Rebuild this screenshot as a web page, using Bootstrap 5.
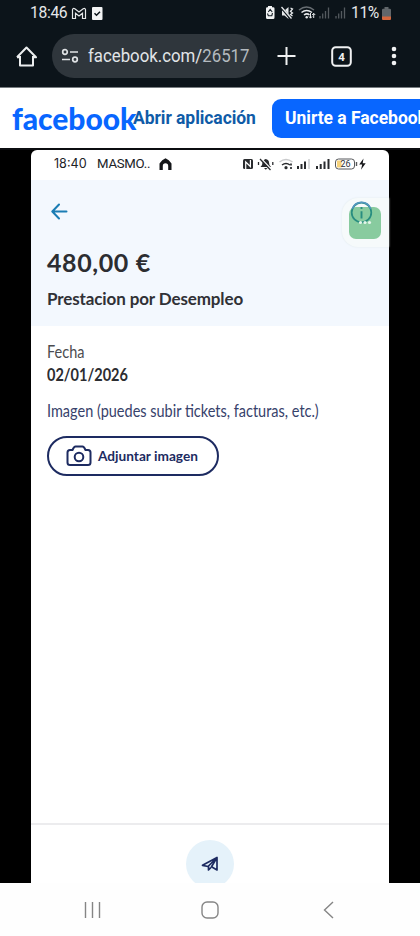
<!DOCTYPE html>
<html lang="es">
<head>
<meta charset="utf-8">
<meta name="viewport" content="width=device-width, initial-scale=1">
<title>Facebook</title>
<link href="https://cdn.jsdelivr.net/npm/bootstrap@5.3.0/dist/css/bootstrap.min.css" rel="stylesheet">
<style>
body{font-family:Roboto,"Liberation Sans",sans-serif;width:420px;height:936px;overflow:hidden;background:#fefefe}
svg{display:block;flex:none}
span,h1,h2,p,a,button{white-space:nowrap}
.chrome{background:#0c141a;height:87px;color:#e6e8ea}
.sysbar{height:26px;padding:0 29px 0 30px;font-size:15.7px;line-height:26px;letter-spacing:-.35px}
.toolbar{height:60px;padding:0 16px}
.omnibox{width:206px;height:44px;background:#2f363c;margin-left:15px;padding-left:9px;border-radius:22px}
.url{font-size:18.5px;line-height:22px;margin-left:9px;color:#e2e5e8;transform:scaleX(.908);transform-origin:0 50%}
.url i{font-style:normal;color:#b4babf}
.plus{margin-left:19px}
.tabs{margin-left:35px}
.dots{margin-left:39px}
.fbhead{height:63px;background:#fff;border-top:1px solid #777c80;border-bottom:2px solid #0b0d10;padding-left:12px}
.wordmark{font:900 30px/34px Lato,sans-serif;color:#0866ff;width:121px;letter-spacing:-.05px}
.openapp{color:#0f5ba7;font-weight:700;font-size:17.5px;width:139px;letter-spacing:-.06px}
.join{background:#0866ff;border-radius:9px;height:39px;font-weight:700;font-size:17.5px;padding:0 13px;line-height:39px;color:#fff;letter-spacing:-.03px}
.stage{height:733px;background:#000;padding:0 31px;overflow:hidden}
.shot{width:358px;height:733px;background:#fff;border-radius:6px 6px 0 0;font-family:Lato,sans-serif}
.innerbar{height:30px;padding:0 23px 0 23px;color:#202226;font:13.2px/28px Roboto,sans-serif;padding-bottom:2px}
.t1{font:12.6px/28px Inter,sans-serif;width:34px}
.t2{margin-left:9px;letter-spacing:-.25px;width:52px}
.house{margin-left:10px}
.summary{height:146px;background:#f3f8fe;padding:20px 16px 0}
.amount{font-size:25px;font-weight:700;line-height:30px;color:#2c2d31;margin:27px 0 0;letter-spacing:.6px}
.concept{font-size:17px;font-weight:700;line-height:22px;color:#303136;margin:11px 0 0;letter-spacing:-.12px}
.details{height:497px;padding:15px 16px 0;font-size:16.5px;line-height:22px}
.details p span,.attach span{display:inline-block;transform-origin:0 50%}
.lbl{color:#4b4c50}
.lbl span{transform:scaleX(.88)}
.datum{font-weight:700;color:#2c2d31;margin-top:1px}
.datum span{transform:scaleX(.88)}
.hint{color:#37426b;margin-top:14px}
.hint span{transform:scaleX(.878)}
.attach{width:172px;height:40px;border:2px solid #1d2b61;border-radius:20px;color:#1d2b61;font:700 14px/20px Lato,sans-serif;background:#fff;margin-top:14px;padding:0 0 0 17px}
.attach span{margin-left:6px;transform:scaleX(.975)}
.sendbar{height:60px;border-top:2px solid #ececee;padding-top:15px}
.send{width:48px;height:48px;background:#e5f2fa}
.floater{right:0;top:48px;width:47px;height:49px;border-radius:16px 0 0 16px;background:#f6fafb;box-shadow:0 0 2px #dfe8ea}
.green{left:7px;top:9px;width:32px;height:32px;border-radius:7px;background:#88cb9f}
.info{left:8px;top:3px}
.ellipsis{left:16px;top:22px}
.navkeys{height:53px;background:#fefefe;padding:0 86px 0 84px}
.homekey{margin-left:-4px}
</style>
<script src="https://cdn.jsdelivr.net/npm/bootstrap@5.3.0/dist/js/bootstrap.bundle.min.js"></script>
</head>
<body>
<header class="chrome">
  <div class="sysbar d-flex align-items-center">
    <span>18:46</span>
    <svg class="ms-1" width="16" height="13" viewBox="0 0 16 13" fill="none" stroke="#e6e8ea" stroke-width="1.2"><path d="M1.500 11.500V2.600Q2 .7 3.800 1.800L8 5l4.200-3.200Q14 .7 14.500 2.600v8.900h-3V6.200L8 9 4.500 6.200v5.300z"/></svg>
    <svg class="ms-1" width="12" height="13" viewBox="0 0 12 13"><rect x="1" width="10.500" height="13" rx="1" fill="#f2f3f4"/><path d="M3.500 6.300l2 2L9 4.800" fill="none" stroke="#0c141a" stroke-width="1.500"/></svg>
    <svg class="ms-auto" width="82" height="16" viewBox="265 5 82 16"><path d="M266 8.500q0-1.200 1.200-1.200h.8V6h4v1.300h1.200q1.300 0 1.300 1.200v9q0 1.500-1.300 1.500h-5.900q-1.300 0-1.300-1.500z" fill="#f2f3f4"/><path d="M268.300 12l1.900-2.500 2 2.500M272.500 13l-.7 2.700h-3.500l-.8-2.200" fill="none" stroke="#172027" stroke-width="1.100"/><path d="M282 10.500h2.500l4-3.500v12l-4-3.500H282z" fill="#e6e8ea"/><path d="M281 7l9 11" stroke="#0c141a" stroke-width="2.400"/><path d="M281.500 7l10 11.500M290.500 8l2 1-2 2.500 2 1.500-2 1.500 2 1.500" fill="none" stroke="#e6e8ea" stroke-width="1.300"/><g fill="none" stroke-width="1.500"><path d="M299 10q7.500-6 15 0" stroke="#686e73"/><path d="M301.500 12.500q5-4 10.500 0M304 15q3-2.300 5.500 0" stroke="#e6e8ea"/><path d="M310.500 13v5m-1.600-1.600l1.600 1.800 1.600-1.800M313.700 18v-4.500m-1.500 1.500l1.500-1.700 1.500 1.700" stroke="#e6e8ea" stroke-width="1"/></g><circle cx="306.700" cy="17.300" r="1.200" fill="#e6e8ea"/><g stroke="#545a5f" stroke-width="1.300"><path d="M320 16v2.500M322.700 13.500v5M325.500 11v7.500M328.500 7.500v11M336 16v2.500M338.700 13.500v5M341.500 11v7.500M344.500 7.500v11"/></g></svg>
    <span class="ms-1">11%</span>
    <svg style="margin-left:3px" width="9" height="13" viewBox="0 0 9 13"><path d="M0 3q0-1.200 1.200-1.200H2.500V0h4v1.800h1.300Q9 1.800 9 3v7H0z" fill="#61666a"/><path d="M0 9.500h9V12q0 1-1 1H1q-1 0-1-1z" fill="#d4673d"/></svg>
  </div>
  <div class="toolbar d-flex align-items-center">
    <svg width="21" height="21" viewBox="0 0 21 21" fill="none" stroke="#eceeef" stroke-width="2" stroke-linejoin="round"><path d="M4 10v9.500h13V10M1 11.300L10.500 1.500 20 11.300h-3M1 11.300h3"/></svg>
    <div class="omnibox d-flex align-items-center">
      <svg width="18" height="16" viewBox="0 0 18 16" fill="none" stroke="#dfe2e4" stroke-width="1.700"><circle cx="4" cy="4" r="2.300"/><path d="M9 4h8M1 11.500h8"/><circle cx="14" cy="11.500" r="2.300"/></svg>
      <span class="url">facebook.com/<i>26517</i></span>
    </div>
    <svg class="plus" width="19" height="20" viewBox="0 0 19 20" stroke="#f0f1f2" stroke-width="2"><path d="M9.500 1v18M.5 10h18"/></svg>
    <svg class="tabs" width="21" height="21" viewBox="0 0 21 21"><rect x="1.200" y="1.200" width="18.600" height="18.600" rx="3.500" fill="none" stroke="#f0f1f2" stroke-width="2"/><text x="10.500" y="14.500" text-anchor="middle" font-size="11.500" font-weight="700" fill="#f0f1f2">4</text></svg>
    <svg class="dots" width="6" height="20" viewBox="0 0 6 20" fill="#f0f1f2"><circle cx="3" cy="3" r="2.300"/><circle cx="3" cy="10" r="2.300"/><circle cx="3" cy="17" r="2.300"/></svg>
  </div>
</header>
<div class="fbhead d-flex align-items-center overflow-hidden">
  <span class="wordmark flex-shrink-0">facebook</span>
  <span class="openapp flex-shrink-0">Abrir aplicación</span>
  <span class="join flex-shrink-0">Unirte a Facebook</span>
</div>
<main class="stage">
  <div class="shot position-relative">
    <div class="innerbar d-flex align-items-center">
      <span class="t1">18:40</span><span class="t2">MASMO..</span>
      <svg class="house" width="13" height="12" viewBox="0 0 13 12"><path d="M.5 12V5.500Q3 1.500 6.500.2q3.500 1.300 6 5.300V12h-3.300V8a2.700 2.700 0 0 0-5.400 0v4z" fill="#151619"/></svg>
      <svg class="ms-auto" width="124" height="14" viewBox="242 157 124 14"><rect x="243" y="159" width="10" height="10" rx="1.500" fill="#292b2e"/><path d="M245.700 169v-7l4.700 4.500V160" fill="none" stroke="#fff" stroke-width="1.200"/><path d="M260.500 167q2-1.500 2-4.500 .5-3 3-3.500 3.500.5 3.500 3.500 0 3 2 4.500zM264 168h3.500l-1.700 1.700z" fill="#292b2e"/><path d="M261 158.500l10.500 11" stroke="#fff" stroke-width="1.600"/><path d="M260 159l10.500 11M258.500 162v3M272.800 162v3" stroke="#292b2e" stroke-width="1.300"/><g fill="none" stroke-width="1.500"><path d="M279.500 162q6.500-5 13 0" stroke="#c9cacc"/><path d="M282 165q4-3 8 0" stroke="#292b2e"/></g><circle cx="286" cy="167.700" r="1.600" fill="#292b2e"/><path d="M291 163.500v2M291 167v2" stroke="#292b2e" stroke-width="1.700"/><g stroke="#292b2e" stroke-width="2"><path d="M298 166v3M301.500 164v5M305 161.500v7.500M317 166v3M320.700 164v5M324.500 161.500v7.500M328.500 159v10"/></g><path d="M309 159v10" stroke="#d8d9db" stroke-width="2"/><rect x="335.500" y="159" width="19" height="10" rx="3" fill="#fff" stroke="#55575a"/><path d="M337 160.500h4.500v7H337z" fill="#f6d27b"/><path d="M356.500 162v4" stroke="#55575a" stroke-width="1.400"/><text x="345.500" y="167.200" font-size="9" text-anchor="middle" fill="#303236">26</text><path d="M363.500 158.500l-4.300 6h3l-1.200 5.300 4.700-6.600h-3z" fill="#151619"/></svg>
    </div>
    <section class="summary">
      <svg style="margin:3px 0 0 4px" width="17" height="17" viewBox="0 0 17 17" fill="none" stroke="#1b7db4" stroke-width="2" stroke-linecap="round" stroke-linejoin="round"><path d="M15.500 8.500H1.500M8 1.500l-6.700 7 6.700 7"/></svg>
      <h1 class="amount">480,00 €</h1>
      <h2 class="concept">Prestacion por Desempleo</h2>
    </section>
    <section class="details">
      <p class="lbl mb-0"><span>Fecha</span></p>
      <p class="datum mb-0"><span>02/01/2026</span></p>
      <p class="hint mb-0"><span>Imagen (puedes subir tickets, facturas, etc.)</span></p>
      <button type="button" class="attach d-flex align-items-center">
        <svg width="26" height="22" viewBox="0 0 26 22" fill="none" stroke="#1d2b61" stroke-width="2" stroke-linejoin="round"><path d="M4 5H6.500Q8 1.500 9.500 1.500h7Q18 1.500 19.500 5H22q2.500 0 2.500 2.500v10q0 2.500-2.500 2.500H4q-2.500 0-2.500-2.500v-10Q1.500 5 4 5z"/><circle cx="13" cy="12" r="4.300"/></svg>
        <span>Adjuntar imagen</span>
      </button>
    </section>
    <div class="sendbar">
      <div class="send rounded-circle mx-auto d-flex align-items-center justify-content-center">
        <svg width="18" height="16" viewBox="0 0 18 16" fill="none" stroke="#1d2b61" stroke-width="1.700" stroke-linejoin="round"><path d="M16 1.500L1.500 9.300 7 10.500zM16 1.500V14l-5.500-3.200zM7.500 10.500V14l2.500-2.500"/></svg>
      </div>
    </div>
    <div class="floater position-absolute">
      <div class="green position-absolute"></div>
      <svg class="info position-absolute" width="23" height="23" viewBox="0 0 23 23"><circle cx="11.500" cy="11.500" r="9.800" fill="none" stroke="#288d80" stroke-width="1.700"/><path d="M2.300 7.800a9.800 9.800 0 0 1 18.400 0" fill="none" stroke="#5497c0" stroke-width="1.700"/><path d="M11.500 10.200v7.300M11.500 6v2" stroke="#288d80" stroke-width="1.900"/></svg>
      <svg class="ellipsis position-absolute" width="14" height="5" viewBox="0 0 14 5" fill="#e4f5ea"><circle cx="2.500" cy="2.500" r="1.600"/><circle cx="7" cy="2.500" r="1.600"/><circle cx="11.500" cy="2.500" r="1.600"/></svg>
    </div>
  </div>
</main>
<nav class="navkeys d-flex align-items-center justify-content-between">
  <svg width="17" height="18" viewBox="0 0 17 18" stroke="#858585" stroke-width="1.400"><path d="M1.500 1v16M8.500 1v16M15.500 1v16"/></svg>
  <svg class="homekey" width="18" height="18" viewBox="0 0 18 18" fill="none" stroke="#858585" stroke-width="1.400"><rect x="1" y="1" width="16" height="16" rx="5"/></svg>
  <svg width="11" height="18" viewBox="0 0 11 18" fill="none" stroke="#858585" stroke-width="1.400"><path d="M10 1L1.500 9l8.500 8"/></svg>
</nav>
</body>
</html>
